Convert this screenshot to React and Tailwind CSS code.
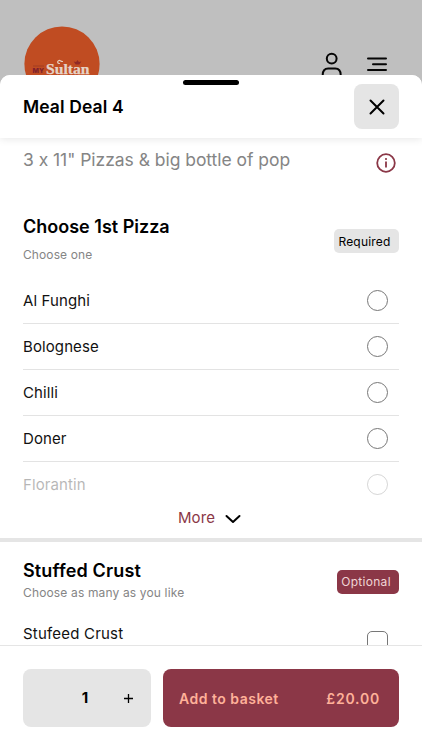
const pizzas = ['Al Funghi', 'Bolognese', 'Chilli', 'Doner', 'Florantin']

function Logo() {
  return (
    <svg width="76" height="76" viewBox="0 0 76 76" className="shrink-0">
      <circle cx="38" cy="38" r="37.6" fill="#c04c22" />
      <path d="M9 40h11" stroke="#96371f" strokeWidth="0.7" />
      <text x="8.5" y="46.5" fontSize="6" fontWeight="800" fontFamily="Inter, sans-serif" fill="#7d1f2c" textLength="11.5" lengthAdjust="spacingAndGlyphs">MY</text>
      <text x="22" y="47.500" fontSize="14.500" fontWeight="700" fontFamily='"Liberation Serif", serif' fill="#e6d3c6" stroke="#e6d3c6" strokeWidth="0.25" textLength="43.5" lengthAdjust="spacingAndGlyphs">Sultan</text>
      <path d="M35.500 37.500c-2 .2-2.600-2.400-.6-3 1.400-.3 1.900.9 3.600 1" fill="none" stroke="#e6d3c6" strokeWidth="1.200" strokeLinecap="round" />
      <path d="M51.700 38.500l-2-3 2.400.6 1.400-2.200 1.400 2.200 2.400-.6-2 3z" fill="#8f2a26" />
    </svg>
  )
}

function TopBar() {
  return (
    <header className="h-[75px] shrink-0 overflow-hidden pl-6 pr-[34px] pt-[26px] flex items-start justify-between">
      <Logo />
      <div className="flex items-start gap-6 pt-[26px]">
        <svg width="22" height="26" viewBox="0 0 22 26" fill="none" stroke="#050505" strokeWidth="2" strokeLinecap="round">
          <circle cx="11.700" cy="6.600" r="4.900" />
          <path d="M2.700 26v-3c0-4.200 2-6.600 5.500-6.600h7c3.500 0 5.500 2.400 5.500 6.600V26" />
        </svg>
        <svg width="22" height="26" viewBox="0 0 22 26" fill="none" stroke="#050505" strokeWidth="2" strokeLinecap="round">
          <path d="M2 6.500h18M7 12.200h13M2 18h18" />
        </svg>
      </div>
    </header>
  )
}

function PizzaRow({ name, faded }) {
  return (
    <div className={`flex h-[46px] items-center justify-between border-b pr-[11px] ${faded ? 'border-transparent opacity-30' : 'border-[#e3e3e3]'}`}>
      <span className="text-[15px] leading-5 tracking-[0.1px] text-[#111]">{name}</span>
      <span className="size-[21px] rounded-full border border-[#777]" />
    </div>
  )
}

export default function App() {
  return (
    <div className="flex h-[750px] w-[422px] flex-col overflow-hidden bg-[#bfbfbf] font-['Inter',sans-serif] text-black [font-feature-settings:'calt'_0]">
      <TopBar />

      <main className="flex min-h-0 flex-1 flex-col overflow-hidden rounded-t-[10px] bg-white">
        {/* Sheet header */}
        <div className="relative z-10 flex h-[63px] shrink-0 items-center justify-between bg-white px-[23px] shadow-[0_1px_8px_rgba(0,0,0,0.10)]">
          <div className="absolute left-[183px] top-[5px] h-[5px] w-14 rounded-full bg-black" />
          <h1 className="text-[17.5px] font-semibold leading-6 tracking-[0.1px]">Meal Deal 4</h1>
          <button className="flex size-[45px] items-center justify-center rounded-lg bg-[#e5e5e5]" aria-label="Close">
            <svg width="16" height="16" viewBox="0 0 16 16" fill="none" stroke="black" strokeWidth="2" strokeLinecap="round">
              <path d="M1.500 1.500l13 13M14.500 1.500l-13 13" />
            </svg>
          </button>
        </div>

        <div className="min-h-0 flex-1 overflow-hidden">
          {/* Description */}
          <div className="flex h-[76px] items-start justify-between pl-[23px] pr-[26px] pt-[10px]">
            <p className="text-[17.5px] leading-6 tracking-[-0.04px] text-[#858585]">3 x 11" Pizzas &amp; big bottle of pop</p>
            <svg className="mt-[5px]" width="20" height="20" viewBox="0 0 20 20" fill="none" stroke="#8b3747" strokeWidth="1.800">
              <circle cx="10" cy="10" r="8.800" />
              <path d="M10 8.500v6" />
              <circle cx="10" cy="6" r="1.100" fill="#8b3747" stroke="none" />
            </svg>
          </div>

          {/* First pizza */}
          <section className="px-[23px]">
            <div className="flex h-16 justify-between">
              <div>
                <h2 className="text-[18px] font-semibold leading-[26px]">Choose 1st Pizza</h2>
                <p className="pt-[5px] text-[12px] leading-5 tracking-[0.1px] text-[#858585]">Choose one</p>
              </div>
              <span className="mt-[15px] flex h-6 w-[65px] items-center justify-center rounded-[5px] bg-[#e5e5e5] pr-1 pt-px text-[12px] tracking-[0.2px]">Required</span>
            </div>
            {pizzas.map((name, i) => (
              <PizzaRow key={name} name={name} faded={i === pizzas.length - 1} />
            ))}
            <button className="flex h-[30px] w-full items-start justify-center gap-[10px] pr-[3px] text-[15px] leading-5 tracking-[0.1px] text-[#8b3747]">
              More
              <svg className="mt-[6px]" width="16" height="10" viewBox="0 0 16 10" fill="none" stroke="black" strokeWidth="2" strokeLinecap="round" strokeLinejoin="round">
                <path d="M1.500 2l6.500 6 6.500-6" />
              </svg>
            </button>
          </section>

          <div className="h-[4px] bg-[#e5e5e5]" />

          {/* Stuffed crust */}
          <section className="px-[23px] pt-4">
            <div className="flex h-[59px] justify-between">
              <div className="pt-px">
                <h2 className="text-[18px] font-semibold leading-6 tracking-[0.15px]">Stuffed Crust</h2>
                <p className="text-[12px] leading-5 tracking-[0.15px] text-[#858585]">Choose as many as you like</p>
              </div>
              <span className="mt-3 flex h-6 w-[62px] items-center justify-center rounded-[5px] bg-[#8b3747] pr-1 text-[12px] tracking-[0.3px] text-[#f0d5d5]">Optional</span>
            </div>
            <div className="flex items-start justify-between pr-[11px] pt-[7px]">
              <span className="text-[15px] leading-5 tracking-[0.2px] text-[#111]">Stufeed Crust</span>
              <span className="mt-[7px] size-[21px] rounded-[5px] border border-[#777]" />
            </div>
          </section>
        </div>

        {/* Basket bar */}
        <footer className="flex h-[105px] shrink-0 gap-3 border-t border-[#e5e5e5] bg-white px-[23px] pt-[23px]">
          <div className="flex h-[58px] w-32 items-center rounded-lg bg-[#e5e5e5]">
            <span className="ml-[57px] w-[10px] text-center text-[15px] font-bold">1</span>
            <svg className="ml-[33px] mt-px" width="11" height="11" viewBox="0 0 11 11" stroke="black" strokeWidth="1.300">
              <path d="M1 5.500h9M5.500 1v9" />
            </svg>
          </div>
          <button className="flex h-[58px] flex-1 items-center justify-between rounded-lg bg-[#8b3747] pl-4 pr-[19px] text-[14px] font-semibold tracking-[0.5px] text-[#ffb199]">
            <span>Add to basket</span>
            <span className="tracking-[0.8px]">£20.00</span>
          </button>
        </footer>
      </main>
    </div>
  )
}
